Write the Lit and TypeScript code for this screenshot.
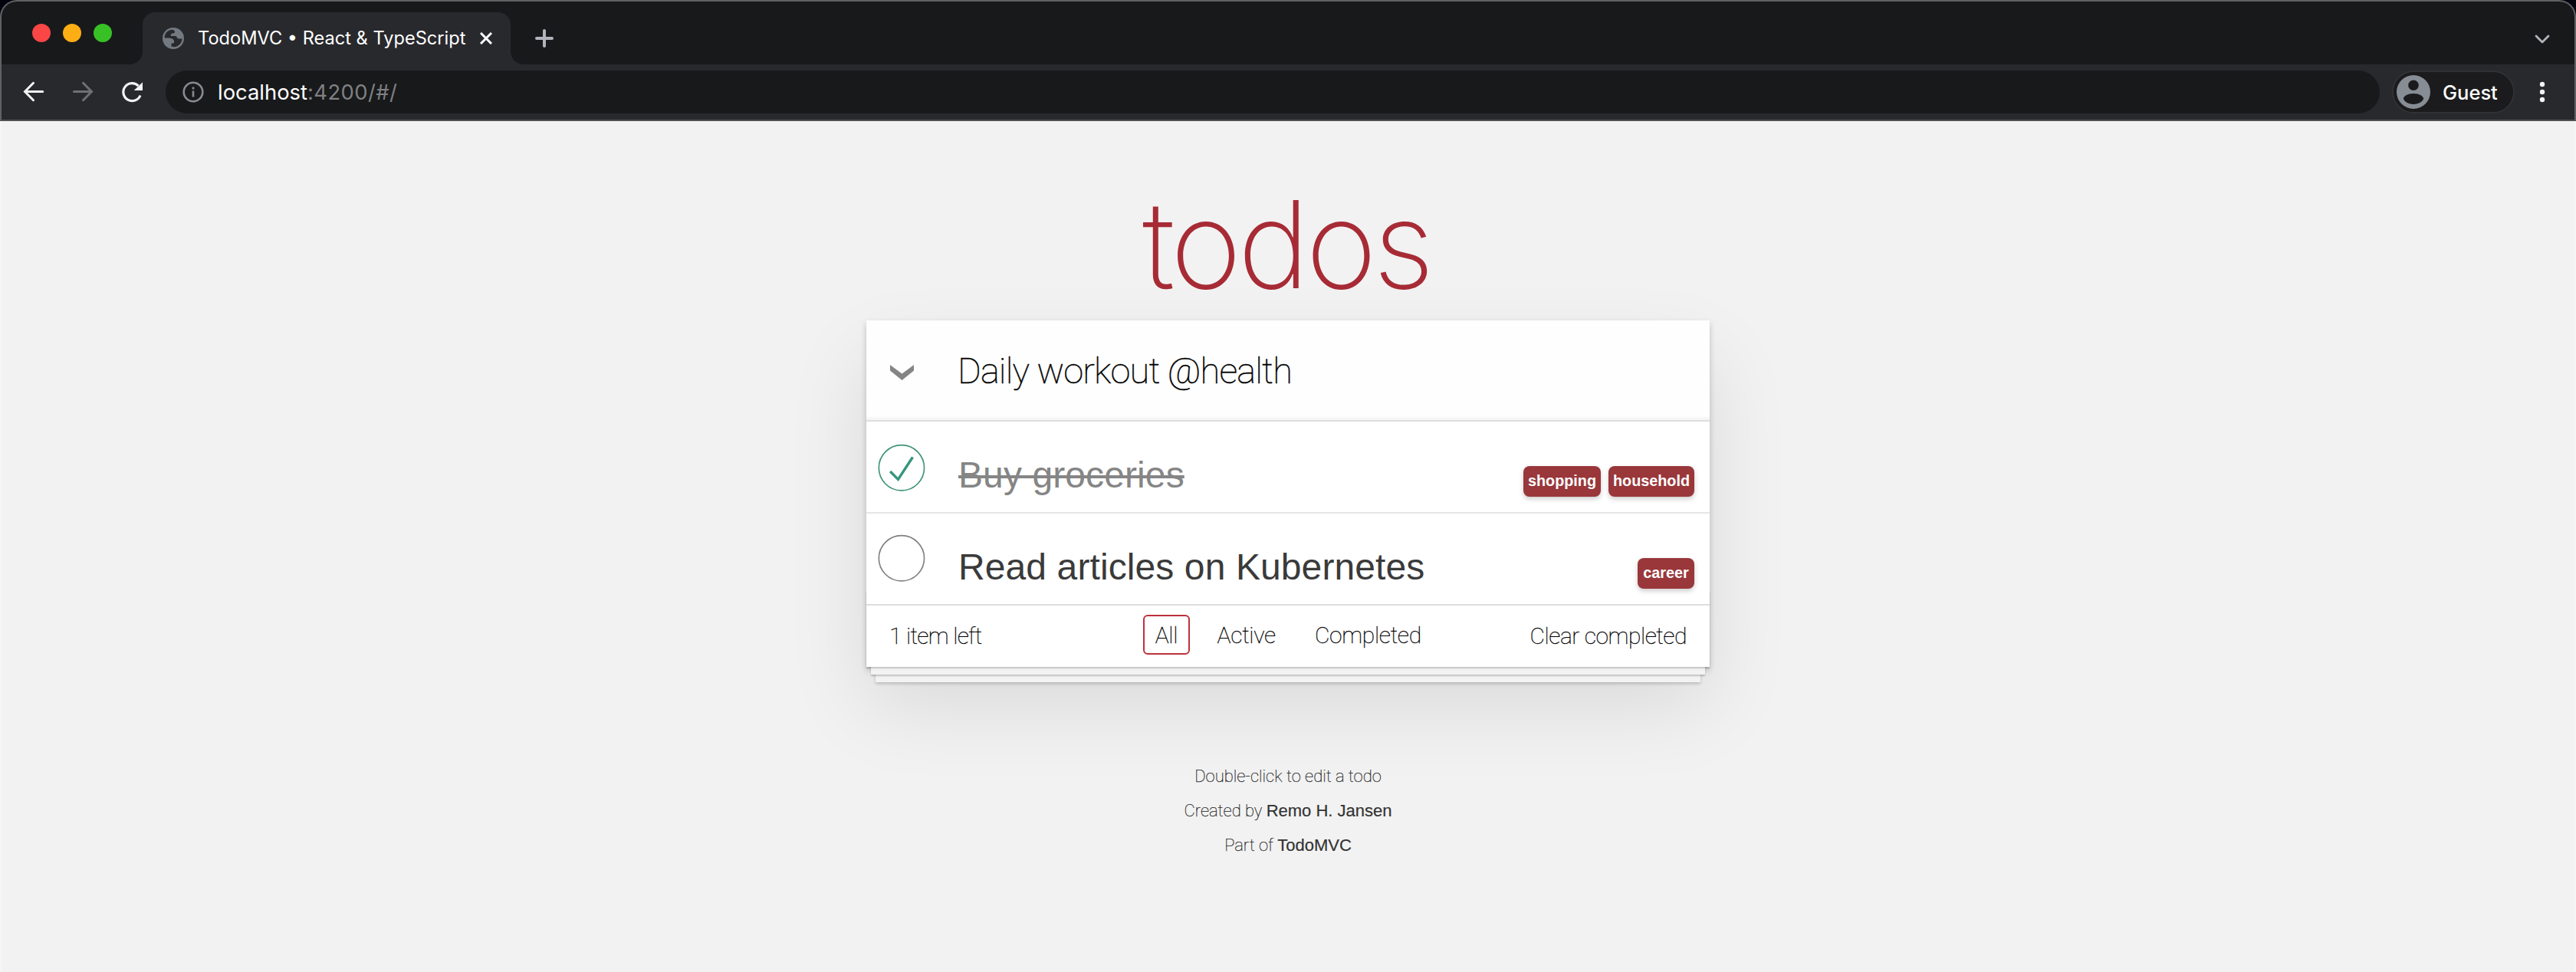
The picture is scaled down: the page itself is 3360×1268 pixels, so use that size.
import { LitElement, html, css, svg } from "lit";
import { customElement, property } from "lit/decorators.js";

@customElement("browser-chrome")
class BrowserChrome extends LitElement {
  static styles = css`
    :host { display: block; background: #02030f; font-family: Inter, "Liberation Sans", sans-serif; }
    .frame { box-sizing: border-box; height: 158px; border: 2px solid #606163; border-bottom-color: #4f5053; border-radius: 22px 22px 0 0; background: #18191b; overflow: hidden; }
    .strip { display: flex; height: 82px; box-sizing: border-box; padding-top: 14px; }
    .lights { display: flex; gap: 16px; padding: 15px 0 0 40px; width: 184px; box-sizing: border-box; }
    .light { width: 24px; height: 24px; border-radius: 50%; flex: none; }
    .red { background: #fb4646; }
    .amber { background: #fdae15; }
    .green { background: #38c126; }
    .tab { position: relative; box-sizing: border-box; width: 480px; height: 68px; background: #28292d; border-radius: 16px 16px 0 0; display: flex; align-items: center; padding: 0 24px 0 26px; }
    .tab::before, .tab::after { content: ""; position: absolute; bottom: 0; width: 16px; height: 16px; }
    .tab::before { left: -16px; background: radial-gradient(circle at 0 0, transparent 15.5px, #28292d 16px); }
    .tab::after { right: -16px; background: radial-gradient(circle at 100% 0, transparent 15.5px, #28292d 16px); }
    .title { color: #fff; font-size: 23.6px; line-height: 28px; white-space: nowrap; margin-left: 18px; flex: 1; }
    .plus { margin: 22px 0 0 32px; }
    .spacer { flex: 1; }
    .down { margin: 28px 31px 0 0; }
    .bar { display: flex; align-items: center; height: 72px; background: #28292d; box-sizing: border-box; padding-left: 26px; }
    .bar svg, .tab svg, .plus, .down { display: block; flex: none; }
    .nav { display: flex; gap: 32px; }
    .omni { display: flex; align-items: center; width: 2888px; height: 56px; border-radius: 28px; background: #18191b; margin-left: 28px; box-sizing: border-box; padding-left: 22px; }
    .url { margin-left: 18px; font-size: 27.4px; line-height: 34px; color: #fff; }
    .dim { color: #7f8082; letter-spacing: 0.4px; }
    .guest { box-sizing: border-box; display: flex; align-items: center; width: 160px; height: 56px; margin-left: 16px; border-radius: 28px; border: 2px solid #303134; background: #1b1b1d; padding-left: 4px; color: #fff; font-size: 25.5px; font-weight: 500; }
    .name { margin-left: 16px; }
    .dots { margin-left: 32px; }
  `;
  render() {
    return html`<div class="frame">
      <div class="strip">
        <div class="lights"><div class="light red"></div><div class="light amber"></div><div class="light green"></div></div>
        <div class="tab">
          <svg width="28" height="28" viewBox="0 0 28 28"><circle cx="14" cy="14" r="14" fill="#737980"/><path d="M2.700 13.500C2.700 8 6 3.500 12 2.800C15 3 16 4 16 6.500L14 7.500C11 7.500 10 9 11 11H17C18.500 11 19 14.500 21 14.500H25.500C25.500 20 21 25 15 25.300L11.500 24.500V20.500H14.500C15.500 19 15.500 17 14 15.500C11.500 13.500 9 13.500 2.700 13.500z" fill="#28292d"/></svg>
          <span class="title">TodoMVC • React &amp; TypeScript</span>
          <svg width="16" height="16" viewBox="0 0 16 16"><path d="M1 1l14 14M15 1L1 15" stroke="#fff" stroke-width="3"/></svg>
        </div>
        <svg class="plus" width="24" height="24" viewBox="0 0 24 24"><path d="M12 2v20M2 12h20" stroke="#b1b4bb" stroke-width="4" stroke-linecap="round"/></svg>
        <div class="spacer"></div>
        <svg class="down" width="22" height="14" viewBox="0 0 22 14"><path d="M3 3l8 8 8-8" fill="none" stroke="#b1b4bb" stroke-width="2.800" stroke-linecap="round" stroke-linejoin="round"/></svg>
      </div>
      <div class="bar">
        <div class="nav">
          <svg width="32" height="32" viewBox="0 0 32 32"><path d="M27.700 15.500H5M15.500 4.300L4.500 15.500l11 11.200" fill="none" stroke="#f1f3f4" stroke-width="3" stroke-linecap="round"/></svg>
          <svg width="32" height="32" viewBox="0 0 32 32"><path d="M4.500 15.500H27M16.500 4.300l11 11.200-11 11.200" fill="none" stroke="#6f7073" stroke-width="3" stroke-linecap="round"/></svg>
          <svg width="32" height="32" viewBox="0 0 32 32"><path d="M27 20.500A11.500 11.500 0 1 1 24.500 8" fill="none" stroke="#f1f3f4" stroke-width="3.200"/><path d="M30 3.200V14H18.700z" fill="#f1f3f4"/></svg>
        </div>
        <div class="omni">
          <svg width="28" height="28" viewBox="0 0 28 28"><circle cx="14" cy="14" r="12.300" fill="none" stroke="#878b91" stroke-width="2.600"/><path d="M14 12.500V20.500M14 7.500v3" stroke="#878b91" stroke-width="2.600"/></svg>
          <span class="url">localhost<span class="dim">:4200/#/</span></span>
        </div>
        <div class="guest">
          <svg width="44" height="44" viewBox="0 0 44 44"><circle cx="22" cy="22" r="22" fill="#878d94"/><circle cx="22" cy="13.300" r="6.800" fill="#1b1b1d"/><path d="M22 24c7 0 13 3.200 13 6.600S29 38 22 38 9 34 9 30.600 15 24 22 24z" fill="#1b1b1d"/></svg>
          <span class="name">Guest</span>
        </div>
        <svg class="dots" width="8" height="28" viewBox="0 0 8 28"><g fill="#f1f3f4"><circle cx="4" cy="4" r="3.200"/><circle cx="4" cy="14" r="3.200"/><circle cx="4" cy="24" r="3.200"/></g></svg>
      </div>
    </div>`;
  }
}

@customElement("todo-item")
class TodoItem extends LitElement {
  @property() label = "";
  @property({ type: Boolean }) done = false;
  @property({ attribute: false }) tags: string[] = [];
  static styles = css`
    :host { display: flex; box-sizing: border-box; height: 120px; border-bottom: 2px solid #e6e6e6; font-family: "Liberation Sans", sans-serif; padding-right: 20px; }
    :host(:last-of-type) { height: 118px; border-bottom: 0; }
    .mark { display: block; flex: none; margin-top: 20px; }
    :host(:last-of-type) .mark { margin-top: 18px; }
    .text { margin-left: 40px; padding-top: 41px; font-size: 48px; line-height: 58px; letter-spacing: 0.1px; color: #3a3a3a; flex: 1; white-space: nowrap; }
    .done { color: #858585; }
    .struck { text-decoration: line-through; text-decoration-thickness: 4px; }
    .tags { display: flex; gap: 10px; padding-top: 58px; }
    .tag { box-sizing: border-box; height: 40px; min-width: 74px; text-align: center; padding: 0 6px; line-height: 39px; border-radius: 8px; background: #99373a; color: #fff; font-size: 19.800px; font-weight: 700; box-shadow: 0 3px 6px rgba(0, 0, 0, 0.2); }
  `;
  render() {
    return html`<svg class="mark" width="80" height="80" viewBox="-10 -18 100 135">
        ${this.done
          ? svg`<circle cx="50" cy="50" r="50" fill="none" stroke="#3f9279" stroke-width="2.800"/><path d="M72 25L42 71 27 56l-4 4 20 20 34-52z" fill="#36957d"/>`
          : svg`<circle cx="50" cy="50" r="50" fill="none" stroke="#808080" stroke-width="2.800"/>`}
      </svg>
      <div class="text ${this.done ? "done" : ""}"><span class=${this.done ? "struck" : ""}>${this.label}</span></div>
      <div class="tags">${this.tags.map((t) => html`<span class="tag">${t}</span>`)}</div>`;
  }
}

@customElement("app-root")
class AppRoot extends LitElement {
  static styles = css`
    :host { display: block; height: 1268px; overflow: hidden; background: #f2f2f2; }
    .page { display: flex; flex-direction: column; align-items: center; box-sizing: border-box; height: 1110px; border: solid #f6f6f6; border-width: 0 2px; }
    h1 { margin: 71px 0 10px; height: 179px; line-height: 179px; font-family: Inter, sans-serif; font-weight: 200; font-size: 158px; color: #a72b35; letter-spacing: -4.8px; text-indent: -4px; flex: none; }
    .card { width: 1100px; flex: none; background: #fff; box-shadow: 0 4px 8px rgba(0, 0, 0, 0.2), 0 50px 100px rgba(0, 0, 0, 0.1); }
    .entry { display: flex; align-items: center; box-sizing: border-box; height: 132px; padding-left: 31px; background: #fefefe; border-bottom: 2px solid #dedede; box-shadow: inset 0 -4px 2px rgba(0, 0, 0, 0.03); }
    .arrow { display: block; margin-top: 5px; }
    .draft { margin: 1px 0 0 57px; font: 100 47px/60px Roboto, sans-serif; letter-spacing: -0.85px; color: #000; -webkit-text-stroke: 0.5px #000; }
    .foot { position: relative; box-sizing: border-box; height: 82px; border-top: 2px solid #dedede; font: 100 30px/36px Roboto, sans-serif; letter-spacing: -0.45px; color: #000; -webkit-text-stroke: 0.3px #000; display: grid; grid-template-columns: 1fr auto 1fr; align-items: center; padding: 0 30px 1px 30px; }
    .foot::before { content: ""; position: absolute; right: 0; bottom: 0; left: 0; height: 100px; pointer-events: none; box-shadow: 0 2px 2px rgba(0, 0, 0, 0.2), 0 16px 0 -6px #f3f3f3, 0 18px 2px -6px rgba(0, 0, 0, 0.2), 0 32px 0 -12px #f3f3f3, 0 34px 4px -12px rgba(0, 0, 0, 0.2); }
    .count { letter-spacing: -0.75px; }
    .filters { display: flex; gap: 21px; letter-spacing: -0.3px; margin-top: -3px; }
    .filter { box-sizing: border-box; height: 52px; line-height: 50px; padding: 0 13px; border: 2px solid transparent; border-radius: 6px; }
    .on { border-color: #bd313b; padding: 0 13.5px; }
    .clear { text-align: right; }
    .info { margin-top: 130px; text-align: center; font: 100 22px/26px Roboto, sans-serif; color: #222; -webkit-text-stroke: 0.25px #222; }
    .info p { margin: 0 0 19px; }
    .info b { font: 400 22px/26px "Liberation Sans", sans-serif; color: #333; -webkit-text-stroke: 0.2px #333; }
  `;
  render() {
    return html`<browser-chrome></browser-chrome>
      <div class="page">
        <h1>todos</h1>
        <div class="card">
          <div class="entry">
            <svg class="arrow" width="31" height="20" viewBox="0 0 31 20"><path d="M0 0l15.500 11.500L31 0v7.500L15.500 20 0 7.500z" fill="#858585"/></svg>
            <span class="draft">Daily workout @health</span>
          </div>
          <todo-item label="Buy groceries" done .tags=${["shopping", "household"]}></todo-item>
          <todo-item label="Read articles on Kubernetes" .tags=${["career"]}></todo-item>
          <div class="foot">
            <span class="count">1 item left</span>
            <div class="filters"><span class="filter on">All</span><span class="filter">Active</span><span class="filter">Completed</span></div>
            <span class="clear">Clear completed</span>
          </div>
        </div>
        <div class="info">
          <p>Double-click to edit a todo</p>
          <p>Created by <b>Remo H. Jansen</b></p>
          <p>Part of <b>TodoMVC</b></p>
        </div>
      </div>`;
  }
}
